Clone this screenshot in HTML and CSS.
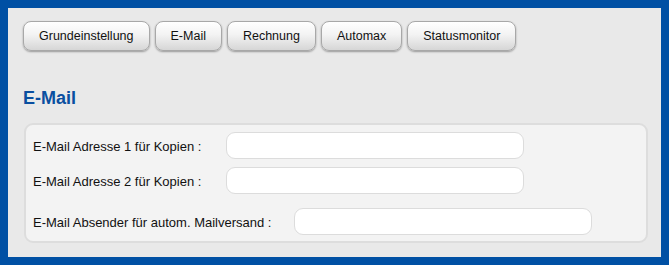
FILE: index.html
```html
<!DOCTYPE html>
<html lang="de">
<head>
  <meta charset="UTF-8" />
  <title>Einstellungen - E-Mail</title>
  <link rel="stylesheet" href="styles.css">
</head>
<body>
  <div class="frame">
    <div class="tabs">
      <button type="button">Grundeinstellung</button>
      <button type="button">E-Mail</button>
      <button type="button">Rechnung</button>
      <button type="button">Automax</button>
      <button type="button">Statusmonitor</button>
    </div>

    <h2>E-Mail</h2>

    <form class="panel">
      <div class="row">
        <label class="lbl">E-Mail Adresse 1 für Kopien :</label>
        <input name="mail_copy_1" type="text" />
      </div>
      <div class="row">
        <label class="lbl">E-Mail Adresse 2 für Kopien :</label>
        <input name="mail_copy_2" type="text" />
      </div>
      <div class="row wide">
        <label class="lbl">E-Mail Absender für autom. Mailversand :</label>
        <input name="mail_sender" type="text" />
      </div>
    </form>
  </div>
</body>
</html>
```

FILE: styles.css
```css
* {
  box-sizing: border-box;
}

html, body {
  margin: 0;
  height: 100%;
}

body {
  font-family: "Liberation Sans", Arial, sans-serif;
  font-size: 13px;
  color: #111;
}

.frame {
  height: 100%;
  border: 8px solid #0050a4;
  background: #e9e9e9;
  padding: 13px 0 0 15px;
}

.tabs {
  display: flex;
  gap: 5px;
}

.tabs button {
  height: 30px;
  padding: 0 15px;
  font-family: inherit;
  font-size: 12.5px;
  color: #111;
  background: linear-gradient(#ffffff, #f3f3f3 45%, #d6d6d6);
  border: 1px solid #a8a8a8;
  border-radius: 8px;
  box-shadow: 0 1px 2px rgba(0, 0, 0, 0.35);
  cursor: pointer;
}

h2 {
  margin: 37px 0 14px 0;
  font-size: 18px;
  line-height: 21px;
  color: #0a4fa0;
}

.panel {
  width: 624px;
  margin-left: 1px;
  background: #f3f3f3;
  border: 2px solid #dddddd;
  border-radius: 9px;
  padding: 7px 7px 6px 7px;
}

.row {
  display: flex;
  align-items: center;
}

.row + .row {
  margin-top: 8px;
}

.row.wide {
  margin-top: 14px;
}

.lbl {
  width: 193px;
  padding-top: 2px;
}

.wide .lbl {
  width: 261px;
}

input {
  width: 298px;
  height: 27px;
  border: 1px solid #dcdcdc;
  border-radius: 9px;
  background: #fff;
  font-family: inherit;
  font-size: 12px;
  padding: 0 8px;
}
```
